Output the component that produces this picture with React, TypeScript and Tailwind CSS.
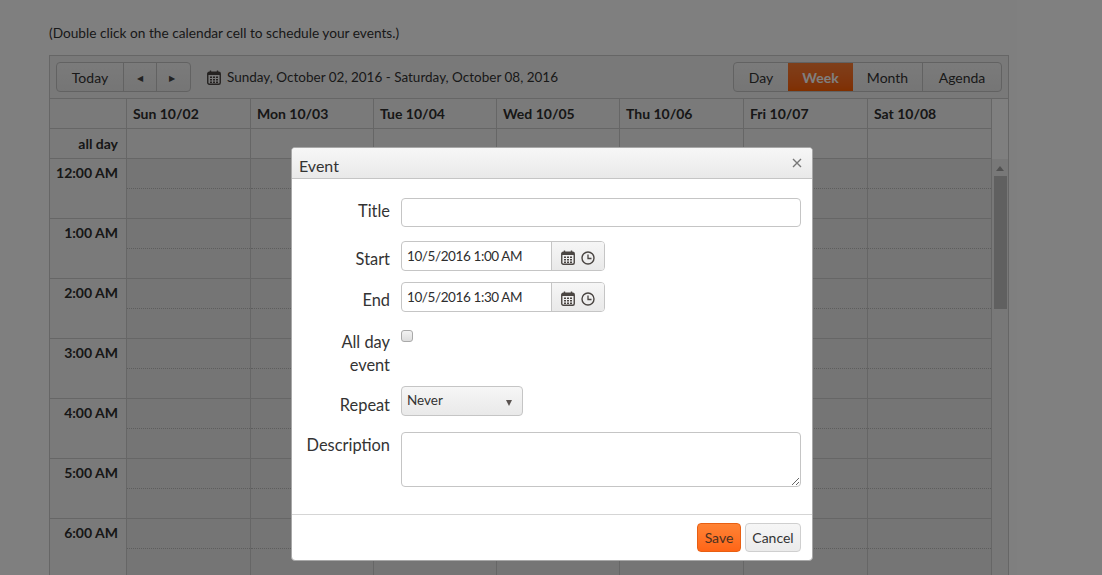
const hours = ["12:00 AM", "1:00 AM", "2:00 AM", "3:00 AM", "4:00 AM", "5:00 AM", "6:00 AM"];

const days = [
  { label: "Sun 10/02", width: "w-[124px]" },
  { label: "Mon 10/03", width: "w-[123px]" },
  { label: "Tue 10/04", width: "w-[123px]" },
  { label: "Wed 10/05", width: "w-[123px]" },
  { label: "Thu 10/06", width: "w-[124px]" },
  { label: "Fri 10/07", width: "w-[124px]" },
  { label: "Sat 10/08", width: "w-[124px]" },
];

const views = ["Day", "Week", "Month", "Agenda"];

function CalendarIcon() {
  return (
    <svg width="14" height="15" viewBox="0 0 14 15" className="shrink-0 text-[#4a4542]">
      <rect x="0.75" y="2.25" width="12.5" height="12" rx="1.5" fill="none" stroke="currentColor" strokeWidth="1.4" />
      <path d="M1 3h12v2H1z" fill="currentColor" />
      <path d="M3.5 0.5v2.5M10.5 0.5v2.5" stroke="currentColor" strokeWidth="1.4" />
      <path
        d="M3 6.5h2v1.6H3zM6 6.5h2v1.6H6zM9 6.5h2v1.6H9zM3 9h2v1.6H3zM6 9h2v1.6H6zM9 9h2v1.6H9zM3 11.5h2v1.4H3zM6 11.5h2v1.4H6zM9 11.5h2v1.4H9z"
        fill="currentColor"
      />
    </svg>
  );
}

function ClockIcon() {
  return (
    <svg width="14" height="14" viewBox="0 0 14 14" className="shrink-0 text-[#4a4542]">
      <circle cx="7" cy="7" r="6" fill="none" stroke="currentColor" strokeWidth="1.4" />
      <path d="M7 3.5V7.5H10.5" fill="none" stroke="currentColor" strokeWidth="1.3" />
    </svg>
  );
}

function DateField({ value, className }: { value: string; className?: string }) {
  return (
    <div className={`flex h-[30px] w-[204px] overflow-hidden rounded-[4px] border border-[#c5c5c5] ${className ?? ""}`}>
      <div className="flex w-[150px] items-center border-r border-[#c5c5c5] pl-[5px] text-[13.5px] tracking-[-0.4px] text-[#2e2e2e]">{value}</div>
      <div className="flex flex-1 items-center gap-[6px] bg-gradient-to-b from-[#f6f6f6] to-[#e9e9e9] pl-[9px] pt-[3px]">
        <CalendarIcon />
        <ClockIcon />
      </div>
    </div>
  );
}

function Scheduler() {
  return (
    <div className="w-[960px] border border-[#cccccc] bg-white">
      <div className="flex h-[43px] items-center justify-between border-b border-[#cccccc] bg-[#f3f3f3] pl-[6px] pr-[6px]">
        <div className="flex items-center">
          <div className="flex h-[30px] items-center overflow-hidden rounded-[4px] border border-[#c5c5c5] bg-gradient-to-b from-[#f6f6f6] to-[#ebebeb] text-[14px] text-[#333]">
            <div className="flex h-full w-[67px] items-center justify-center border-r border-[#c5c5c5]">Today</div>
            <div className="flex h-full w-[33px] items-center justify-center border-r border-[#c5c5c5] pt-[2px] text-[8px] text-[#444]">◀</div>
            <div className="flex h-full w-[33px] items-center justify-center pr-[3px] pt-[2px] text-[8px] text-[#444]">▶</div>
          </div>
          <div className="ml-4 flex items-center gap-[6px] text-[13.5px] text-[#333]">
            <CalendarIcon />
            <span>Sunday, October 02, 2016 - Saturday, October 08, 2016</span>
          </div>
        </div>
        <div className="flex h-[30px] overflow-hidden rounded-[4px] border border-[#c5c5c5] bg-gradient-to-b from-[#f6f6f6] to-[#ebebeb] text-[14px] text-[#333]">
          {views.map((view) => (
            <div
              key={view}
              className={
                view === "Week"
                  ? "flex w-[65px] items-center justify-center bg-gradient-to-b from-[#ff7f35] to-[#ff5f00] font-bold text-[#fff]"
                  : view === "Day"
                    ? "flex w-[54px] items-center justify-center"
                    : view === "Month"
                      ? "flex w-[70px] items-center justify-center border-r border-[#c5c5c5]"
                      : "flex w-[78px] items-center justify-center"
              }
            >
              {view}
            </div>
          ))}
        </div>
      </div>

      <div className="flex">
        <div className="w-[942px]">
          <div className="flex h-[30px] border-b border-[#cccccc] bg-[#f5f5f5]">
            <div className="w-[77px] border-r border-[#cccccc]" />
            {days.map((day) => (
              <div
                key={day.label}
                className={`${day.width} border-r border-[#cccccc] pl-[6px] pt-1 text-[14px] font-bold text-[#2e2e2e]`}
              >
                {day.label}
              </div>
            ))}
          </div>
          <div className="flex h-[30px] border-b border-[#cccccc] bg-[#f5f5f5]">
            <div className="w-[77px] border-r border-[#cccccc] pr-2 pt-1 text-right text-[14px] font-bold text-[#2e2e2e]">
              all day
            </div>
            {days.map((day) => (
              <div key={day.label} className={`${day.width} border-r border-[#cccccc]`} />
            ))}
          </div>
        </div>
        <div className="flex-1 bg-white" />
      </div>

      <div className="flex">
        <div className="w-[942px]">
          {hours.map((hour) => (
            <div key={hour} className="flex h-[60px] border-b border-[#cccccc]">
              <div className="w-[77px] border-r border-[#cccccc] bg-[#f5f5f5] pr-2 pt-[3px] text-right text-[14px] font-bold text-[#2e2e2e]">
                {hour}
              </div>
              {days.map((day) => (
                <div key={day.label} className={`${day.width} border-r border-[#cccccc] bg-[#ebebeb]`}>
                  <div className="h-[30px] border-b border-dotted border-[#bbbbbb]" />
                </div>
              ))}
            </div>
          ))}
        </div>
        <div className="flex flex-1 flex-col items-center bg-[#f0f0f0] pt-[7px]">
          <div className="h-0 w-0 border-x-[4px] border-b-[5px] border-x-transparent border-b-[#a3a3a3]" />
          <div className="mt-[5px] h-[133px] w-[13px] bg-[#c1c1c1]" />
        </div>
      </div>
    </div>
  );
}

function EventDialog() {
  return (
    <div className="absolute left-[291px] top-[147px] z-10 w-[522px] overflow-hidden rounded-[4px] border border-[#a8a8a8] bg-white">
      <div className="flex h-[31px] items-center justify-between border-b border-[#c5c5c5] bg-gradient-to-b from-[#f7f7f7] to-[#e9e9e9] pl-[7px] pr-[10px]">
        <span className="pt-[5px] text-[16px] leading-none text-[#333]">Event</span>
        <svg width="10" height="10" viewBox="0 0 10 10" className="text-[#777]">
          <path d="M1 1l8 8M9 1l-8 8" stroke="currentColor" strokeWidth="1.4" fill="none" />
        </svg>
      </div>

      <div className="grid grid-cols-[98px_400px] gap-x-[11px] pt-[19px] text-[16.4px] text-[#333]">
        <div className="pt-[1px] text-right leading-[23px]">Title</div>
        <input readOnly className="h-[29px] rounded-[4px] border border-[#c5c5c5] bg-white outline-none" />

        <div className="mt-[14px] pt-[6px] text-right leading-[23px]">Start</div>
        <DateField value="10/5/2016 1:00 AM" className="mt-[14px]" />

        <div className="mt-[11px] pt-[6px] text-right leading-[23px]">End</div>
        <DateField value="10/5/2016 1:30 AM" className="mt-[11px]" />

        <div className="mt-[18px] pl-[30px] text-right leading-[23px]">All day event</div>
        <div className="mt-[18px]">
          <div className="h-3 w-3 rounded-[3px] border border-[#a9a9a9] bg-gradient-to-b from-[#f2f2f2] to-[#dddddd]" />
        </div>

        <div className="mt-[10px] pt-[7px] text-right leading-[23px]">Repeat</div>
        <div className="mt-[10px] flex h-[30px] w-[122px] items-center justify-between rounded-[4px] border border-[#c5c5c5] bg-gradient-to-b from-[#f6f6f6] to-[#e9e9e9] pb-[1px] pl-[5px] pr-[10px] text-[13.5px]">
          <span>Never</span>
          <div className="mt-1 h-0 w-0 border-x-[3.5px] border-t-[6px] border-x-transparent border-t-[#5a5350]" />
        </div>

        <div className="mt-[16px] pt-[1px] text-right leading-[23px]">Description</div>
        <textarea readOnly className="mt-[16px] block h-[55px] rounded-[4px] border border-[#c5c5c5] bg-white outline-none" />
      </div>

      <div className="mt-[27px] flex h-[46px] items-start justify-end gap-1 border-t border-[#d5d5d5] pr-[11px] pt-2 text-[14px]">
        <div className="flex h-[29px] w-[44px] items-center justify-center rounded-[4px] border border-[#e85f12] bg-gradient-to-b from-[#ff8334] to-[#ff6516] text-[#4b3020]">
          Save
        </div>
        <div className="flex h-[29px] w-[56px] items-center justify-center rounded-[4px] border border-[#cfcfcf] bg-gradient-to-b from-[#f6f6f6] to-[#ebebeb] text-[#333]">
          Cancel
        </div>
      </div>
    </div>
  );
}

export default function App() {
  return (
    <div className="relative h-[575px] w-[1102px] overflow-hidden bg-white font-['Lato',sans-serif]">
      <div className="pl-[49px] pt-[24px]">
        <p className="mb-[13px] h-[18px] text-[13.7px] leading-[18px] text-[#333]">
          (Double click on the calendar cell to schedule your events.)
        </p>
        <Scheduler />
      </div>
      <div className="absolute inset-0 bg-black/50" />
      <EventDialog />
    </div>
  );
}
